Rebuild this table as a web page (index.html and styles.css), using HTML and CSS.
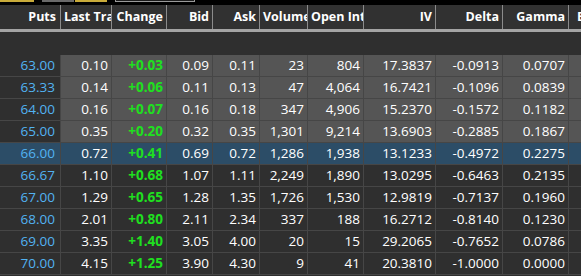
FILE: index.html
```html
<!DOCTYPE html>
<html lang="en">

<head>
    <meta charset="UTF-8">
    <title>Option Chain - Puts</title>
    <link rel="stylesheet" href="styles.css">
</head>

<body>
    <div class="toolbar">
        <span class="tab tab_yellow tab_a"></span>
        <span class="tab tab_grey tab_b"></span>
        <span class="tab tab_yellow tab_c"></span>
        <span class="tab tab_box"></span>
    </div>

    <div class="chain">
        <div class="row head">
            <div>Puts</div>
            <div>Last Trade</div>
            <div>Change</div>
            <div>Bid</div>
            <div>Ask</div>
            <div>Volume</div>
            <div>Open Interest</div>
            <div>IV</div>
            <div>Delta</div>
            <div>Gamma</div>
            <div class="last">Expiry</div>
        </div>
        <div class="spacer"></div>
        <div id="rows"></div>
    </div>

    <script>
        const puts = [
            ['63.00', '0.10', '+0.03', '0.09', '0.11', '23', '804', '17.3837', '-0.0913', '0.0707', 'itm'],
            ['63.33', '0.14', '+0.06', '0.11', '0.13', '47', '4,064', '16.7421', '-0.1096', '0.0839', 'itm'],
            ['64.00', '0.16', '+0.07', '0.16', '0.18', '347', '4,906', '15.2370', '-0.1572', '0.1182', 'itm'],
            ['65.00', '0.35', '+0.20', '0.32', '0.35', '1,301', '9,214', '13.6903', '-0.2885', '0.1867', 'itm'],
            ['66.00', '0.72', '+0.41', '0.69', '0.72', '1,286', '1,938', '13.1233', '-0.4972', '0.2275', 'atm'],
            ['66.67', '1.10', '+0.68', '1.07', '1.11', '2,249', '1,890', '13.0295', '-0.6463', '0.2135', ''],
            ['67.00', '1.29', '+0.65', '1.28', '1.35', '1,726', '1,530', '12.9819', '-0.7137', '0.1960', ''],
            ['68.00', '2.01', '+0.80', '2.11', '2.34', '337', '188', '16.2712', '-0.8140', '0.1230', ''],
            ['69.00', '3.35', '+1.40', '3.05', '4.00', '20', '15', '29.2065', '-0.7652', '0.0786', ''],
            ['70.00', '4.15', '+1.25', '3.90', '4.30', '9', '41', '20.3810', '-1.0000', '0.0000', '']
        ];

        const list_dom = document.getElementById('rows');
        puts.map(item => {
            const div = document.createElement('div');
            div.className = `row item ${item[10]}`;
            div.innerHTML = `
                <div class="strike">${item[0]}</div>
                <div>${item[1]}</div>
                <div class="change">${item[2]}</div>
                <div>${item[3]}</div>
                <div>${item[4]}</div>
                <div>${item[5]}</div>
                <div>${item[6]}</div>
                <div>${item[7]}</div>
                <div>${item[8]}</div>
                <div>${item[9]}</div>
                <div></div>`;
            list_dom.appendChild(div);
        });
    </script>
</body>

</html>
```

FILE: styles.css
```css
html,
body {
    margin: 0;
    padding: 0;
}

:root {
    --bg: #2f2f2f;
    --cell-itm: #555555;
    --line: #464646;
    --atm: #2c4d67;
    --strike: #52b3f2;
    --up: #1fe01f;
}

body {
    width: 581px;
    height: 276px;
    overflow: hidden;
    background: var(--bg);
    font-family: "Open Sans", "Noto Sans", sans-serif;
    color: #ffffff;
}

.toolbar {
    height: 5px;
    background: #000000;
    display: flex;
    align-items: flex-start;
}

.toolbar .tab {
    height: 2px;
}

.tab_yellow {
    background: #c9ab3a;
}

.tab_grey {
    background: #6a6a6a;
}

.tab_a {
    width: 34px;
}

.tab_b {
    width: 32px;
    margin-left: 8px;
}

.tab_c {
    width: 32px;
    margin-left: 1px;
}

.tab_box {
    width: 78px;
    margin-left: 8px;
    border: 1px solid #9a9a9a;
    border-top: none;
    height: 1px !important;
    background: #1a1a1a;
}

.chain {
    width: 581px;
    overflow: hidden;
}

.row {
    display: grid;
    grid-template-columns: 61px 51px 55px 46px 47px 48px 56px 72px 67px 66px 80px;
    width: 649px;
}

.row div {
    box-sizing: border-box;
    text-align: right;
    white-space: nowrap;
    overflow: hidden;
    border-right: 1px solid var(--line);
    padding: 0 3px;
}

.head {
    height: 27px;
    background: #313131;
    border-bottom: 3px solid #a4a4a4;
    box-sizing: border-box;
    font-size: 12.5px;
    font-weight: bold;
}

.head div {
    line-height: 24px;
    border-right-color: #8b8b8b;
}

.head div:first-child {
    padding-right: 4px;
}

.head .last {
    text-align: left;
    padding-left: 8px;
    border-right: none;
}

.spacer {
    height: 23px;
}

.item {
    height: 22px;
    border-bottom: 1px solid var(--line);
    box-sizing: border-box;
    font-size: 13.5px;
}

.item div {
    line-height: 21px;
}

.item .strike {
    color: var(--strike);
    padding-right: 5px;
}

.item .change {
    color: var(--up);
    font-weight: bold;
}

.item.itm div {
    background: var(--cell-itm);
}

.item.itm .strike {
    background: var(--bg);
}

.item.atm div {
    background: var(--atm);
}
```
